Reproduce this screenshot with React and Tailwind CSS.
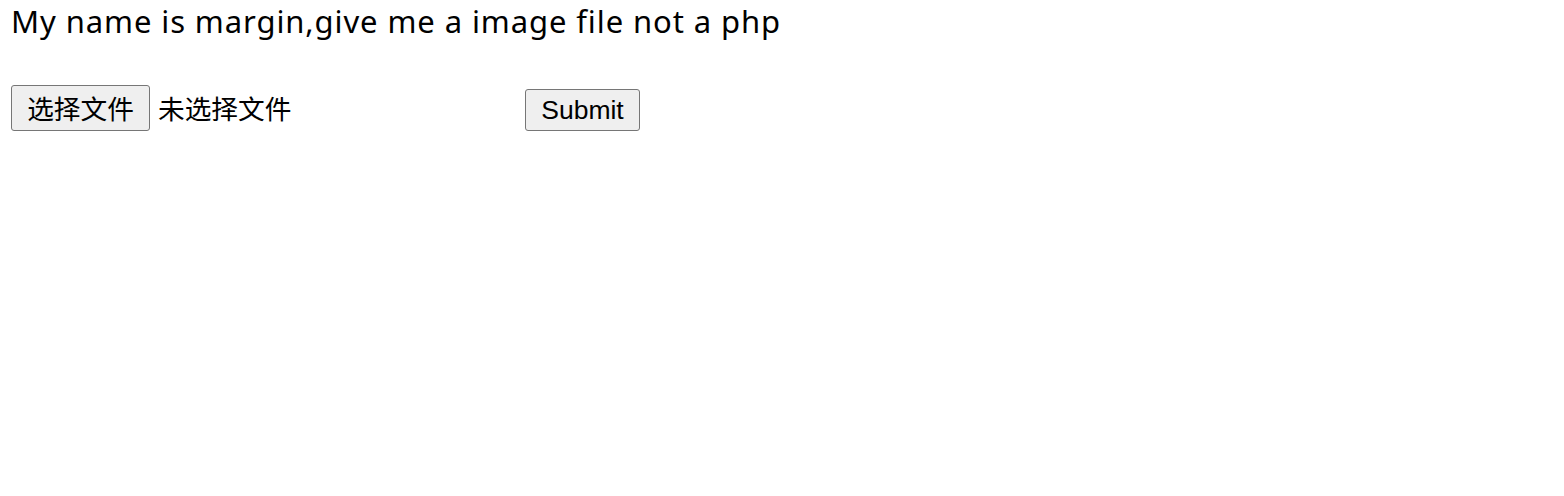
export default function App() {
  return (
    <div className="min-h-[496px] bg-white pl-[11px] pt-[1px] text-black">
      {/* Message line */}
      <div className="h-[40px] font-['Noto_Sans',sans-serif] text-[31px] leading-[40px] tracking-[0.9px] whitespace-nowrap">
        My name is margin,give me a image file not a php
      </div>

      {/* Upload form */}
      <form className="mt-[44px] flex items-end" onSubmit={(e) => e.preventDefault()}>
        <div className="flex w-[508px] items-end">
          <button
            type="button"
            className="flex h-[46px] w-[139px] items-center justify-center rounded-[3px] border border-[#767676] bg-[#efefef] font-['Noto_Sans_CJK_SC',sans-serif] text-[26.7px] leading-none"
          >
            选择文件
          </button>
          <span className="ml-[8px] flex h-[46px] items-center font-['Noto_Sans_CJK_SC',sans-serif] text-[26.7px] leading-none">
            未选择文件
          </span>
        </div>
        <button
          type="submit"
          className="ml-[6px] flex h-[42px] w-[115px] items-center justify-center rounded-[3px] border border-[#767676] bg-[#efefef] font-['Liberation_Sans',sans-serif] text-[26.5px] leading-none"
        >
          Submit
        </button>
      </form>
    </div>
  )
}
